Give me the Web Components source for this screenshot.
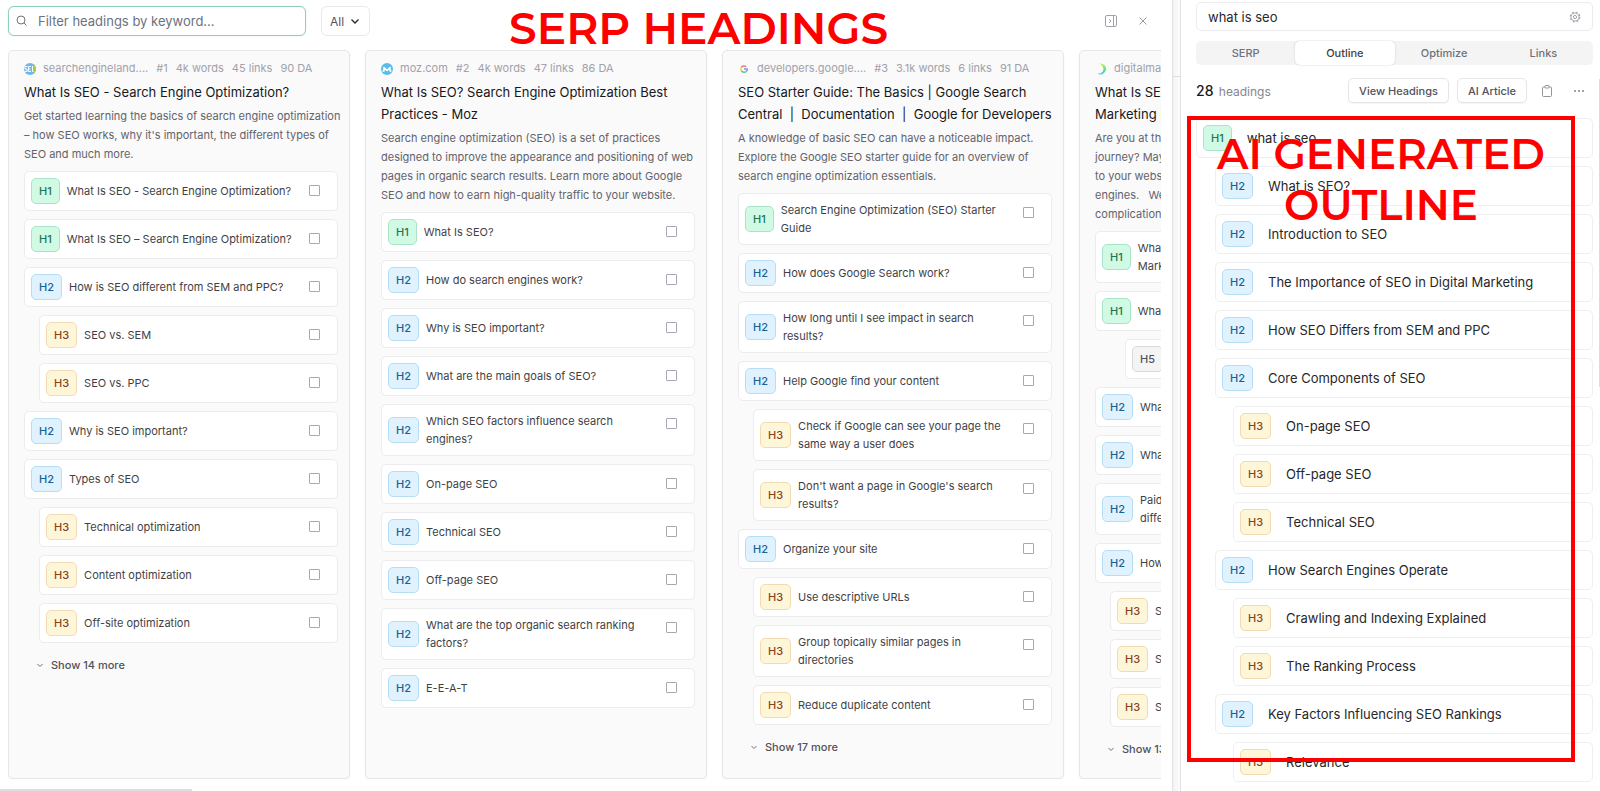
<!DOCTYPE html>
<html lang="en">
<head>
<meta charset="utf-8">
<title>Outline editor</title>
<style>
    html, body {
        margin: 0;
        height: 100%;
        background: #fff;
        font-family: Inter, "Liberation Sans", sans-serif;
        color: #18181b;
    }
    body {
        overflow: hidden;
    }
</style>
</head>
<body>
<app-shell>
    <serp-board slot="main">
        <serp-card>
            <svg slot="favicon" viewBox="0 0 24 24" width="12" height="12">
                <defs><clipPath id="sel"><circle cx="12" cy="12" r="12"/></clipPath></defs>
                <g clip-path="url(#sel)">
                    <rect width="24" height="24" fill="#6fb6ee"/>
                    <rect x="19" width="5" height="24" fill="#a5cf3f"/>
                    <path d="M7 7H2v5h4v5H1M14 7H9v10h5M9 12h4M17 6v11h2" fill="none" stroke="#fff" stroke-width="2"/>
                </g>
            </svg>
            <span slot="domain">searchengineland....</span>
            <span slot="meta">#1</span><span slot="meta">4k words</span><span slot="meta">45 links</span><span slot="meta">90 DA</span>
            <span slot="title">What Is SEO - Search Engine Optimization?</span>
            <span slot="description">Get started learning the basics of search engine optimization – how SEO works, why it's important, the different types of SEO and much more.</span>
            <serp-heading level="1">What Is SEO - Search Engine Optimization?</serp-heading>
            <serp-heading level="1">What Is SEO – Search Engine Optimization?</serp-heading>
            <serp-heading level="2">How is SEO different from SEM and PPC?</serp-heading>
            <serp-heading level="3">SEO vs. SEM</serp-heading>
            <serp-heading level="3">SEO vs. PPC</serp-heading>
            <serp-heading level="2">Why is SEO important?</serp-heading>
            <serp-heading level="2">Types of SEO</serp-heading>
            <serp-heading level="3">Technical optimization</serp-heading>
            <serp-heading level="3">Content optimization</serp-heading>
            <serp-heading level="3">Off-site optimization</serp-heading>
            <span slot="more">Show 14 more</span>
        </serp-card>

        <serp-card>
            <svg slot="favicon" viewBox="0 0 24 24" width="12" height="12">
                <circle cx="12" cy="12" r="12" fill="#5bbcea"/>
                <path d="M3 16h3V9l6 6 6-6v7h3" fill="none" stroke="#fff" stroke-width="3" stroke-linejoin="round"/>
            </svg>
            <span slot="domain">moz.com</span>
            <span slot="meta">#2</span><span slot="meta">4k words</span><span slot="meta">47 links</span><span slot="meta">86 DA</span>
            <span slot="title">What Is SEO? Search Engine Optimization Best Practices - Moz</span>
            <span slot="description">Search engine optimization (SEO) is a set of practices designed to improve the appearance and positioning of web pages in organic search results. Learn more about Google SEO and how to earn high-quality traffic to your website.</span>
            <serp-heading level="1">What Is SEO?</serp-heading>
            <serp-heading level="2">How do search engines work?</serp-heading>
            <serp-heading level="2">Why is SEO important?</serp-heading>
            <serp-heading level="2">What are the main goals of SEO?</serp-heading>
            <serp-heading level="2">Which SEO factors influence search engines?</serp-heading>
            <serp-heading level="2">On-page SEO</serp-heading>
            <serp-heading level="2">Technical SEO</serp-heading>
            <serp-heading level="2">Off-page SEO</serp-heading>
            <serp-heading level="2">What are the top organic search ranking factors?</serp-heading>
            <serp-heading level="2">E-E-A-T</serp-heading>
        </serp-card>

        <serp-card>
            <svg slot="favicon" viewBox="0 0 24 24" width="12" height="12">
                <g fill="none" stroke-width="3">
                    <path d="M16.500 7.500A6.500 6.500 0 0 0 6.500 9" stroke="#ee7d73"/>
                    <path d="M6.500 9a6.500 6.500 0 0 0 0 6" stroke="#f9cf57"/>
                    <path d="M6.500 15a6.500 6.500 0 0 0 10 2" stroke="#6cc087"/>
                    <path d="M16.500 17a6.500 6.500 0 0 0 2-5H12" stroke="#6fa3f5"/>
                </g>
            </svg>
            <span slot="domain">developers.google....</span>
            <span slot="meta">#3</span><span slot="meta">3.1k words</span><span slot="meta">6 links</span><span slot="meta">91 DA</span>
            <span slot="title">SEO Starter Guide: The Basics | Google Search Central &nbsp;|&nbsp; Documentation &nbsp;|&nbsp; Google for Developers</span>
            <span slot="description">A knowledge of basic SEO can have a noticeable impact. Explore the Google SEO starter guide for an overview of search engine optimization essentials.</span>
            <serp-heading level="1">Search Engine Optimization (SEO) Starter Guide</serp-heading>
            <serp-heading level="2">How does Google Search work?</serp-heading>
            <serp-heading level="2">How long until I see impact in search results?</serp-heading>
            <serp-heading level="2">Help Google find your content</serp-heading>
            <serp-heading level="3">Check if Google can see your page the same way a user does</serp-heading>
            <serp-heading level="3">Don't want a page in Google's search results?</serp-heading>
            <serp-heading level="2">Organize your site</serp-heading>
            <serp-heading level="3">Use descriptive URLs</serp-heading>
            <serp-heading level="3">Group topically similar pages in directories</serp-heading>
            <serp-heading level="3">Reduce duplicate content</serp-heading>
            <span slot="more">Show 17 more</span>
        </serp-card>

        <serp-card>
            <svg slot="favicon" viewBox="0 0 24 24" width="12" height="12">
                <defs><linearGradient id="dmi" x1="0" y1="0" x2="0" y2="1"><stop offset="0" stop-color="#d6f03c"/><stop offset=".6" stop-color="#4fdc9a"/><stop offset="1" stop-color="#3fd0e8"/></linearGradient></defs>
                <path d="M9 1a11 11 0 1 1-4 20c6 1 11-2 12-8 0-5-3-9-8-12z" fill="url(#dmi)"/>
            </svg>
            <span slot="domain">digitalmarketi....</span>
            <span slot="title">What Is SEO<br>Marketing In</span>
            <span slot="description">Are you at the<br>journey? Maybe<br>to your website<br>engines. &nbsp; We<br>complications</span>
            <serp-heading level="1">What<br>Marketing</serp-heading>
            <serp-heading level="1">What</serp-heading>
            <serp-heading level="5"></serp-heading>
            <serp-heading level="2">What</serp-heading>
            <serp-heading level="2">What</serp-heading>
            <serp-heading level="2">Paid<br>different</serp-heading>
            <serp-heading level="2">How</serp-heading>
            <serp-heading level="3">SEO</serp-heading>
            <serp-heading level="3">SEO</serp-heading>
            <serp-heading level="3">SEO</serp-heading>
            <span slot="more">Show 13 more</span>
        </serp-card>
    </serp-board>

    <outline-panel slot="side">
        <outline-row level="1">what is seo</outline-row>
        <outline-row level="2">What is SEO?</outline-row>
        <outline-row level="2">Introduction to SEO</outline-row>
        <outline-row level="2">The Importance of SEO in Digital Marketing</outline-row>
        <outline-row level="2">How SEO Differs from SEM and PPC</outline-row>
        <outline-row level="2">Core Components of SEO</outline-row>
        <outline-row level="3">On-page SEO</outline-row>
        <outline-row level="3">Off-page SEO</outline-row>
        <outline-row level="3">Technical SEO</outline-row>
        <outline-row level="2">How Search Engines Operate</outline-row>
        <outline-row level="3">Crawling and Indexing Explained</outline-row>
        <outline-row level="3">The Ranking Process</outline-row>
        <outline-row level="2">Key Factors Influencing SEO Rankings</outline-row>
        <outline-row level="3">Relevance</outline-row>
        <span slot="callout">AI GENERATED<br>OUTLINE</span>
    </outline-panel>
</app-shell>

<script>
class AppShell extends HTMLElement {
    connectedCallback() {
        this.attachShadow({ mode: 'open' });
        this.shadowRoot.innerHTML = `
            <style>
                :host {
                    display: flex;
                    height: 100vh;
                }
                ::slotted([slot="main"]) {
                    flex: 1;
                    min-width: 0;
                }
                ::slotted([slot="side"]) {
                    flex: 0 0 419px;
                }
                .divider {
                    box-sizing: border-box;
                    width: 9px;
                    border: solid #e2e2e5;
                    border-width: 0 1px;
                    background: linear-gradient(90deg, #f3f3f3, #fcfcfc);
                }
                .divider::before {
                    content: "";
                    display: block;
                    height: 76px;
                    border-bottom: 1px solid #dcdcdf;
                }
            </style>
            <slot name="main"></slot>
            <div class="divider"></div>
            <slot name="side"></slot>
        `;
    }
}

class LevelBadge extends HTMLElement {
    connectedCallback() {
        const level = this.getAttribute('level');
        this.attachShadow({ mode: 'open' });
        this.shadowRoot.innerHTML = `
            <style>
                :host {
                    display: block;
                    flex: none;
                    box-sizing: border-box;
                    height: 26px;
                    padding: 0 7px;
                    border: 1px solid #d9d9dc;
                    border-radius: 5px;
                    background: #f4f4f5;
                    color: #52525b;
                    font-size: 11px;
                    font-weight: 500;
                    line-height: 24px;
                }
                :host([level="1"]) {
                    background: #d1fae5;
                    border-color: #a9e4c9;
                    color: #1f7556;
                }
                :host([level="2"]) {
                    background: #e0f2fe;
                    border-color: #b5def6;
                    color: #156394;
                }
                :host([level="3"]) {
                    background: #fef6d9;
                    border-color: #f2dbb2;
                    color: #8c4219;
                }
            </style>
            H${level}
        `;
    }
}

class SerpHeading extends HTMLElement {
    connectedCallback() {
        this.attachShadow({ mode: 'open' });
        this.shadowRoot.innerHTML = `
            <style>
                :host {
                    display: block;
                }
                :host([level="3"]) {
                    margin-left: 15px;
                }
                :host([level="5"]) {
                    margin-left: 30px;
                }
                label {
                    display: flex;
                    align-items: center;
                    gap: 7px;
                    box-sizing: border-box;
                    min-height: 40px;
                    padding: 0 17px 0 6px;
                    border: 1px solid #ececee;
                    border-radius: 5px;
                    background: #fff;
                }
                .text {
                    flex: 1;
                    padding: 7px 0;
                    color: #3f3f46;
                    font-size: 11px;
                    line-height: 18px;
                }
                input {
                    appearance: none;
                    align-self: flex-start;
                    box-sizing: border-box;
                    width: 11px;
                    height: 11px;
                    margin: 13px 0 0;
                    border: 1px solid #a8a8b0;
                    border-radius: 1px;
                    background: #fff;
                }
            </style>
            <label>
                <level-badge level="${this.getAttribute('level')}"></level-badge>
                <span class="text"><slot></slot></span>
                <input type="checkbox">
            </label>
        `;
    }
}

class SerpCard extends HTMLElement {
    connectedCallback() {
        const more = this.querySelector('[slot="more"]') ? `
            <button type="button">
                <svg viewBox="0 0 8 8" width="8" height="8"><path d="M1.500 3 4 5.500 6.500 3" fill="none" stroke="#71717a"/></svg>
                <slot name="more"></slot>
            </button>` : '';
        this.attachShadow({ mode: 'open' });
        this.shadowRoot.innerHTML = `
            <style>
                :host {
                    display: block;
                    flex: 0 0 342px;
                    box-sizing: border-box;
                    padding: 9px 2px 0 15px;
                    border: 1px solid #e6e6e8;
                    border-radius: 5px;
                    background: #fafafa;
                    box-shadow: 0 1px 2px rgba(0, 0, 0, 0.05);
                }
                .meta {
                    display: flex;
                    align-items: center;
                    gap: 8px;
                    margin-bottom: 4px;
                    color: #a1a1aa;
                    font-size: 11px;
                    line-height: 17px;
                    white-space: nowrap;
                }
                .site {
                    display: flex;
                    align-items: center;
                    gap: 7px;
                    max-width: 129px;
                }
                h3 {
                    margin: 0 0 4px;
                    font-size: 13px;
                    font-weight: 400;
                    line-height: 22px;
                }
                p {
                    margin: 0 0 7px;
                    color: #63636b;
                    font-size: 11px;
                    line-height: 19px;
                }
                .list {
                    display: flex;
                    flex-direction: column;
                    gap: 8px;
                    margin-right: 9px;
                }
                button {
                    display: flex;
                    align-items: center;
                    gap: 7px;
                    height: 20px;
                    margin-top: 12px;
                    padding: 0 12px;
                    border: 0;
                    background: none;
                    color: #52525b;
                    font: 500 11px Inter, "Liberation Sans", sans-serif;
                }
            </style>
            <div class="meta">
                <span class="site"><slot name="favicon"></slot><slot name="domain"></slot></span>
                <slot name="meta"></slot>
            </div>
            <h3><slot name="title"></slot></h3>
            <p><slot name="description"></slot></p>
            <div class="list"><slot></slot></div>
            ${more}
        `;
    }
}

class SerpBoard extends HTMLElement {
    connectedCallback() {
        this.attachShadow({ mode: 'open' });
        this.shadowRoot.innerHTML = `
            <style>
                :host {
                    display: flex;
                    flex-direction: column;
                    position: relative;
                    overflow: hidden;
                }
                .toolbar {
                    display: flex;
                    align-items: center;
                    padding: 6px 23px 14px 8px;
                }
                .search {
                    display: flex;
                    align-items: center;
                    gap: 10px;
                    box-sizing: border-box;
                    width: 298px;
                    height: 30px;
                    padding: 0 7px;
                    border: 1px solid #8fd0b6;
                    border-radius: 6px;
                    box-shadow: 0 0 1px #8fd0b6;
                }
                .search input {
                    flex: 1;
                    min-width: 0;
                    padding: 0;
                    border: 0;
                    outline: 0;
                    background: none;
                    font: 13px Inter, "Liberation Sans", sans-serif;
                }
                .search input::placeholder {
                    color: #6b7280;
                    opacity: 1;
                }
                .filter {
                    position: relative;
                    margin-left: 15px;
                }
                select {
                    appearance: none;
                    width: 49px;
                    height: 30px;
                    padding: 0 8px;
                    border: 1px solid #e9e9eb;
                    border-radius: 6px;
                    background: #fff;
                    color: #52525b;
                    font: 12px Inter, "Liberation Sans", sans-serif;
                }
                .filter svg {
                    position: absolute;
                    top: 10px;
                    right: 10px;
                    pointer-events: none;
                }
                .actions {
                    display: flex;
                    gap: 20px;
                    margin-left: auto;
                }
                .actions button {
                    display: flex;
                    padding: 0;
                    border: 0;
                    background: none;
                }
                .label {
                    position: absolute;
                    top: 0;
                    left: 509px;
                    color: #f00;
                    font: 600 44px/56px Montserrat, Inter, sans-serif;
                    white-space: nowrap;
                }
                .columns {
                    display: flex;
                    flex: 1;
                    gap: 15px;
                    min-height: 0;
                    margin: 0 11px 0 8px;
                    overflow: hidden;
                }
                .scrollbar {
                    width: 192px;
                    height: 2px;
                    margin-top: 10px;
                    background: #dedee0;
                }
            </style>
            <div class="toolbar">
                <label class="search">
                    <svg viewBox="0 0 12 12" width="12" height="12"><circle cx="5" cy="5" r="4" fill="none" stroke="#71717a"/><path d="m8 8 2.500 2.500" stroke="#71717a"/></svg>
                    <input type="text" aria-label="Filter headings" placeholder="Filter headings by keyword...">
                </label>
                <span class="filter">
                    <select aria-label="Heading level"><option>All</option></select>
                    <svg viewBox="0 0 10 10" width="10" height="10"><path d="M1.500 3.500 5 7l3.500-3.500" fill="none" stroke="#27272a" stroke-width="1.300"/></svg>
                </span>
                <div class="actions">
                    <button type="button" aria-label="Collapse panel">
                        <svg viewBox="0 0 12 12" width="12" height="12" fill="none" stroke="#a1a1aa"><rect x=".5" y=".5" width="11" height="11" rx="1.500"/><path d="M8.500.5v11M4 4l2 2-2 2"/></svg>
                    </button>
                    <button type="button" aria-label="Close">
                        <svg viewBox="0 0 12 12" width="12" height="12" fill="none" stroke="#95959e"><path d="m2.500 2.500 7 7m0-7-7 7"/></svg>
                    </button>
                </div>
            </div>
            <div class="columns"><slot></slot></div>
            <div class="scrollbar"></div>
            <div class="label">SERP HEADINGS</div>
        `;
    }
}

class OutlineRow extends HTMLElement {
    connectedCallback() {
        this.attachShadow({ mode: 'open' });
        this.shadowRoot.innerHTML = `
            <style>
                :host {
                    display: flex;
                    align-items: center;
                    gap: 15px;
                    box-sizing: border-box;
                    min-height: 40px;
                    padding: 0 6px;
                    border: 1px solid #efeff1;
                    border-radius: 5px;
                    background: #fff;
                    color: #27272a;
                    font-size: 13px;
                }
                :host([level="2"]) {
                    margin-left: 19px;
                }
                :host([level="3"]) {
                    margin-left: 37px;
                }
            </style>
            <level-badge level="${this.getAttribute('level')}"></level-badge>
            <span><slot></slot></span>
        `;
    }
}

class OutlinePanel extends HTMLElement {
    connectedCallback() {
        this.attachShadow({ mode: 'open' });
        this.shadowRoot.innerHTML = `
            <style>
                :host {
                    display: block;
                    position: relative;
                    box-sizing: border-box;
                    padding: 2px 7px 0 15px;
                    overflow: hidden;
                }
                button, input {
                    font: 500 11px Inter, "Liberation Sans", sans-serif;
                }
                .keyword {
                    display: flex;
                    align-items: center;
                    box-sizing: border-box;
                    height: 29px;
                    padding: 0 11px;
                    border: 1px solid #ececee;
                    border-radius: 5px;
                }
                .keyword input {
                    flex: 1;
                    min-width: 0;
                    padding: 0;
                    border: 0;
                    outline: 0;
                    color: #27272a;
                    font-size: 13px;
                    font-weight: 400;
                }
                .tabs {
                    display: flex;
                    margin-top: 10px;
                    border-radius: 5px;
                    background: #f4f4f5;
                }
                .tabs button {
                    flex: 1;
                    height: 24px;
                    padding: 0;
                    border: 0;
                    border-radius: 5px;
                    background: none;
                    color: #71717a;
                }
                .tabs button[aria-selected="true"] {
                    background: #fff;
                    color: #3f3f46;
                    box-shadow: 0 0 2px rgba(0, 0, 0, 0.2);
                }
                .bar {
                    display: flex;
                    align-items: center;
                    gap: 8px;
                    margin: 13px 0 14px;
                }
                .count {
                    flex: 1;
                    color: #85858d;
                    font-size: 12px;
                }
                .count b {
                    margin-right: 2px;
                    color: #18181b;
                    font-size: 14px;
                    font-weight: 500;
                }
                .bar button {
                    height: 25px;
                    padding: 0 10px;
                    border: 1px solid #e6e6e8;
                    border-radius: 5px;
                    background: #fff;
                    color: #52525b;
                    box-shadow: 0 1px 1px rgba(0, 0, 0, 0.04);
                }
                .bar button.icon {
                    display: flex;
                    align-items: center;
                    height: 24px;
                    padding: 0 10px 0 6px;
                    border: 0;
                    background: none;
                    box-shadow: none;
                }
                .bar button.icon + .icon {
                    padding: 0 8px 0 2px;
                }
                .list {
                    display: flex;
                    flex-direction: column;
                    gap: 8px;
                    padding-top: 1px;
                }
                .scrollbar {
                    position: absolute;
                    top: 79px;
                    right: 0;
                    width: 1px;
                    height: 308px;
                    background: #dcdcdf;
                }
                .callout {
                    position: absolute;
                    inset: 116px 25px 29px 6px;
                    border: 4px solid #f00;
                    padding-top: 9px;
                    color: #f00;
                    font: 600 42px/51px Montserrat, Inter, sans-serif;
                    text-align: center;
                    pointer-events: none;
                }
            </style>
            <label class="keyword">
                <input type="text" aria-label="Keyword" value="what is seo">
                <svg viewBox="0 0 24 24" width="12" height="12" fill="none" stroke="#a1a1aa">
                    <circle cx="12" cy="12" r="9.600" stroke-width="2.400" stroke-dasharray="4 3.540"/>
                    <circle cx="12" cy="12" r="8" stroke-width="1.500"/>
                    <circle cx="12" cy="12" r="3.200" stroke-width="2"/>
                </svg>
            </label>
            <div class="tabs" role="tablist">
                <button type="button" role="tab">SERP</button>
                <button type="button" role="tab" aria-selected="true">Outline</button>
                <button type="button" role="tab">Optimize</button>
                <button type="button" role="tab">Links</button>
            </div>
            <div class="bar">
                <span class="count"><b>28</b> headings</span>
                <button type="button">View Headings</button>
                <button type="button">AI Article</button>
                <button type="button" class="icon" aria-label="Copy outline">
                    <svg viewBox="0 0 12 12" width="12" height="12" fill="none" stroke="#95959e"><path d="M4 2H2.500a1 1 0 0 0-1 1v7.500a1 1 0 0 0 1 1h7a1 1 0 0 0 1-1V3a1 1 0 0 0-1-1H8"/><rect x="4" y=".5" width="4" height="2.500" rx=".5"/></svg>
                </button>
                <button type="button" class="icon" aria-label="More options">
                    <svg viewBox="0 0 12 12" width="12" height="12" fill="#85858d"><circle cx="2" cy="6" r="1"/><circle cx="6" cy="6" r="1"/><circle cx="10" cy="6" r="1"/></svg>
                </button>
            </div>
            <div class="list"><slot></slot></div>
            <div class="scrollbar"></div>
            <div class="callout"><slot name="callout"></slot></div>
        `;
    }
}

customElements.define('app-shell', AppShell);
customElements.define('level-badge', LevelBadge);
customElements.define('serp-heading', SerpHeading);
customElements.define('serp-card', SerpCard);
customElements.define('serp-board', SerpBoard);
customElements.define('outline-row', OutlineRow);
customElements.define('outline-panel', OutlinePanel);
</script>
</body>
</html>
